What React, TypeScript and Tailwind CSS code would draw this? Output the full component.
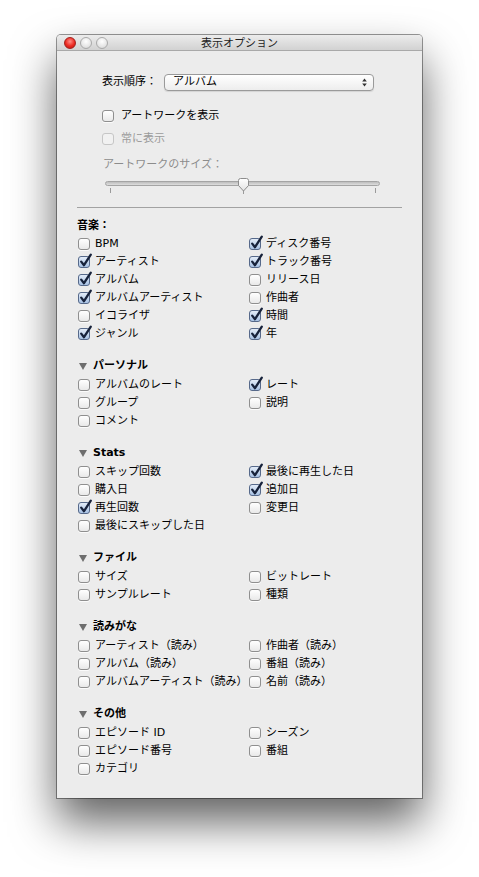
import clsx from "clsx";

type Item = { label: string; on?: boolean };
type Section = { title: string; arrow: boolean; left: Item[]; right: Item[] };

const FONT = {
  fontFamily: '"Lucida Grande", "DejaVu Sans", "Noto Sans CJK JP", sans-serif',
};

const sections: Section[] = [
  {
    title: "音楽：",
    arrow: false,
    left: [
      { label: "BPM" },
      { label: "アーティスト", on: true },
      { label: "アルバム", on: true },
      { label: "アルバムアーティスト", on: true },
      { label: "イコライザ" },
      { label: "ジャンル", on: true },
    ],
    right: [
      { label: "ディスク番号", on: true },
      { label: "トラック番号", on: true },
      { label: "リリース日" },
      { label: "作曲者" },
      { label: "時間", on: true },
      { label: "年", on: true },
    ],
  },
  {
    title: "パーソナル",
    arrow: true,
    left: [{ label: "アルバムのレート" }, { label: "グループ" }, { label: "コメント" }],
    right: [{ label: "レート", on: true }, { label: "説明" }],
  },
  {
    title: "Stats",
    arrow: true,
    left: [
      { label: "スキップ回数" },
      { label: "購入日" },
      { label: "再生回数", on: true },
      { label: "最後にスキップした日" },
    ],
    right: [
      { label: "最後に再生した日", on: true },
      { label: "追加日", on: true },
      { label: "変更日" },
    ],
  },
  {
    title: "ファイル",
    arrow: true,
    left: [{ label: "サイズ" }, { label: "サンプルレート" }],
    right: [{ label: "ビットレート" }, { label: "種類" }],
  },
  {
    title: "読みがな",
    arrow: true,
    left: [
      { label: "アーティスト（読み）" },
      { label: "アルバム（読み）" },
      { label: "アルバムアーティスト（読み）" },
    ],
    right: [{ label: "作曲者（読み）" }, { label: "番組（読み）" }, { label: "名前（読み）" }],
  },
  {
    title: "その他",
    arrow: true,
    left: [{ label: "エピソード ID" }, { label: "エピソード番号" }, { label: "カテゴリ" }],
    right: [{ label: "シーズン" }, { label: "番組" }],
  },
];

function CheckBox({ checked, disabled }: { checked?: boolean; disabled?: boolean }) {
  return (
    <span
      className={clsx(
        "relative block h-[12px] w-[12px] shrink-0 rounded-[3px] border",
        checked
          ? "border-[#56698a] bg-linear-to-b from-[#e3ecf8] to-[#a8c2e4]"
          : disabled
            ? "border-[#c6c6c6] bg-[#f1f1f1]"
            : "border-[#8f8f8f] bg-linear-to-b from-white to-[#e9e9e9] shadow-[0_1px_0_rgba(255,255,255,0.8)]"
      )}
    >
      {checked && (
        <svg className="absolute -top-[4px] left-[0px]" width="14" height="15" viewBox="0 0 14 15">
          <path
            d="M2.2 8.6 L5 12.2 L11.8 1.6"
            stroke="#17223b"
            strokeWidth="2.3"
            fill="none"
            strokeLinecap="round"
            strokeLinejoin="round"
          />
        </svg>
      )}
    </span>
  );
}

function Row({ item }: { item: Item }) {
  return (
    <div className="flex h-[18px] items-center gap-[5px] whitespace-nowrap text-[11px] text-black">
      <CheckBox checked={item.on} />
      <span>{item.label}</span>
    </div>
  );
}

function Light({ red }: { red?: boolean }) {
  return (
    <span
      className={clsx(
        "block h-[12px] w-[12px] rounded-full border",
        red
          ? "border-[#a3201c] bg-[radial-gradient(circle_at_50%_35%,#ff8d86_0%,#ec2a22_55%,#b5160f_100%)]"
          : "border-[#a9a9a9] bg-[radial-gradient(circle_at_50%_35%,#ffffff_0%,#e6e6e6_60%,#cfcfcf_100%)]"
      )}
    />
  );
}

export default function App() {
  return (
    <div className="min-h-[877px] bg-white pl-[57px] pt-[35px]" style={FONT}>
      <div className="flex h-[763px] w-[365px] flex-col overflow-hidden rounded-t-[4px] shadow-[0_24px_45px_rgba(0,0,0,0.62),0_0_0_1px_rgba(0,0,0,0.4)]">
        {/* barra de título */}
        <div className="relative flex h-[16px] items-center border-b border-[#a9a9a9] bg-linear-to-b from-[#ececec] to-[#d2d2d2] pl-[7px]">
          <div className="flex gap-[4px]">
            <Light red />
            <Light />
            <Light />
          </div>
          <span className="absolute inset-x-0 top-[1px] text-center text-[11px] text-[#222]">表示オプション</span>
        </div>

        <div className="flex flex-1 flex-col bg-[#ececec]">
          <div className="mt-[23px] flex items-center pl-[45px]">
            <span className="w-[62px] text-[11px] text-black">表示順序：</span>
            <div className="flex h-[17px] w-[210px] items-center justify-between rounded-[4px] border border-[#9a9a9a] bg-linear-to-b from-white to-[#ededed] pl-[8px] pr-[6px] text-[11px] shadow-[0_1px_1px_rgba(0,0,0,0.1)]">
              <span>アルバム</span>
              <svg width="5" height="9" viewBox="0 0 5 9">
                <path d="M2.5 0.5 L4.8 3.5 L0.2 3.5 Z M2.5 8.5 L4.8 5.5 L0.2 5.5 Z" fill="#333" />
              </svg>
            </div>
          </div>

          <div className="ml-[45px] mt-[16px] flex h-[18px] items-center gap-[7px] text-[11px] text-black">
            <CheckBox />
            <span>アートワークを表示</span>
          </div>
          <div className="ml-[45px] mt-[5px] flex h-[18px] items-center gap-[7px] text-[11px] text-[#9b9b9b]">
            <CheckBox disabled />
            <span>常に表示</span>
          </div>
          <div className="ml-[46px] mt-[8px] flex h-[18px] items-center text-[11px] text-[#8c8c8c]">
            アートワークのサイズ：
          </div>

          <div className="relative ml-[48px] mt-[2px] h-[22px] w-[275px]">
            <div className="absolute inset-x-0 top-[5px] h-[5px] rounded-full border border-[#a4a4a4] bg-linear-to-b from-[#bdbdbd] to-[#dedede]" />
            <span className="absolute left-[5px] top-[12px] h-[5px] w-px bg-[#9a9a9a]" />
            <span className="absolute left-[138px] top-[13px] h-[5px] w-px bg-[#9a9a9a]" />
            <span className="absolute left-[270px] top-[12px] h-[5px] w-px bg-[#9a9a9a]" />
            <svg className="absolute left-[132px] top-[2px]" width="13" height="14" viewBox="0 0 13 14">
              <defs>
                <linearGradient id="knob" x1="0" y1="0" x2="0" y2="1">
                  <stop offset="0" stopColor="#ffffff" />
                  <stop offset="1" stopColor="#e2e2e2" />
                </linearGradient>
              </defs>
              <path
                d="M1.5 2.5 Q1.5 0.5 3.5 0.5 L9.5 0.5 Q11.5 0.5 11.5 2.5 L11.5 7.5 L6.5 13 L1.5 7.5 Z"
                fill="url(#knob)"
                stroke="#8d8d8d"
                strokeWidth="1"
              />
            </svg>
          </div>

          <div className="ml-[20px] mt-[9px] h-px w-[325px] bg-[#a2a2a2]" />

          <div className="mt-[9px] flex flex-col gap-[14px] pl-[20px]">
            {sections.map((s) => (
              <div key={s.title}>
                <div
                  className={clsx(
                    "flex h-[18px] items-center gap-[6px] text-[11px] font-bold text-black",
                    s.arrow && "mb-px pl-[2px]"
                  )}
                >
                  {s.arrow && (
                    <svg width="8" height="7" viewBox="0 0 8 7">
                      <path d="M0 0 L8 0 L4 7 Z" fill="#6e6e6e" />
                    </svg>
                  )}
                  <span>{s.title}</span>
                </div>
                <div className="grid grid-cols-[171px_171px] pl-px">
                  <div className="flex flex-col">
                    {s.left.map((it) => (
                      <Row key={it.label} item={it} />
                    ))}
                  </div>
                  <div className="flex flex-col">
                    {s.right.map((it) => (
                      <Row key={it.label} item={it} />
                    ))}
                  </div>
                </div>
              </div>
            ))}
          </div>
        </div>
      </div>
    </div>
  );
}
